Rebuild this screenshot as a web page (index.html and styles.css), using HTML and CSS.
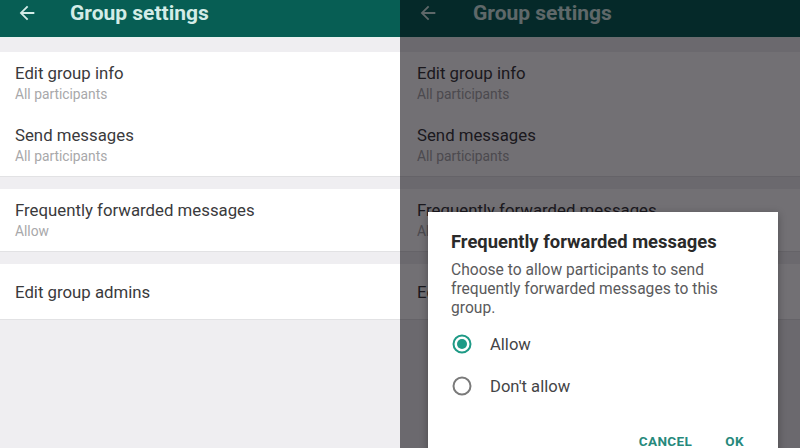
FILE: index.html
```html
<!DOCTYPE html>
<html>
<head>
<meta charset="utf-8">
<link rel="stylesheet" href="styles.css">
</head>
<body>
<div class="stage">
  <div class="phone">
    <div class="header">
      <svg class="back" viewBox="0 0 24 24" width="22" height="22"><path d="M20 11H7.830l5.59-5.59L12 4l-8 8 8 8 1.41-1.41L7.83 13H20v-2z" fill="#d3ece7"/></svg>
      <div class="title">Group settings</div>
    </div>
    <div class="band"></div>
    <div class="section">
      <div class="item"><div class="t">Edit group info</div><div class="s">All participants</div></div>
      <div class="item"><div class="t">Send messages</div><div class="s">All participants</div></div>
    </div>
    <div class="gap"></div>
    <div class="section">
      <div class="item"><div class="t">Frequently forwarded messages</div><div class="s">Allow</div></div>
    </div>
    <div class="gap"></div>
    <div class="section">
      <div class="item single"><div class="t">Edit group admins</div></div>
    </div>
  </div>
  <div class="phone shifted">
    <div class="header">
      <svg class="back" viewBox="0 0 24 24" width="22" height="22"><path d="M20 11H7.83l5.59-5.59L12 4l-8 8 8 8 1.41-1.41L7.83 13H20v-2z" fill="#d3ece7"/></svg>
      <div class="title">Group settings</div>
    </div>
    <div class="band"></div>
    <div class="section">
      <div class="item"><div class="t">Edit group info</div><div class="s">All participants</div></div>
      <div class="item"><div class="t">Send messages</div><div class="s">All participants</div></div>
    </div>
    <div class="gap"></div>
    <div class="section">
      <div class="item"><div class="t">Frequently forwarded messages</div><div class="s">Allow</div></div>
    </div>
    <div class="gap"></div>
    <div class="section">
      <div class="item single"><div class="t">Edit group admins</div></div>
    </div>
    <div class="overlay"></div>
    <div class="dialog">
      <div class="d-title">Frequently forwarded messages</div>
      <div class="d-body">Choose to allow participants to send frequently forwarded messages to this group.</div>
      <div class="options">
        <div class="radio">
          <svg viewBox="0 0 22 22" width="22" height="22"><circle cx="11" cy="11" r="8.5" fill="none" stroke="#1e9a86" stroke-width="2"/><circle cx="11" cy="11" r="5" fill="#1e9a86"/></svg>
          <span>Allow</span>
        </div>
        <div class="radio">
          <svg viewBox="0 0 22 22" width="22" height="22"><circle cx="11" cy="11" r="8.5" fill="none" stroke="#7a7a7a" stroke-width="2"/></svg>
          <span>Don't allow</span>
        </div>
      </div>
      <div class="actions">
        <span class="btn">CANCEL</span>
        <span class="btn">OK</span>
      </div>
    </div>
  </div>
</div>
</body>
</html>
```
FILE: styles.css
```css
* { box-sizing: border-box; }
html, body { margin: 0; padding: 0; }
body {
  width: 800px;
  height: 448px;
  overflow: hidden;
  font-family: Roboto, "Noto Sans", "Liberation Sans", sans-serif;
  background: #efeef1;
}
.stage {
  display: flex;
  width: 800px;
  height: 448px;
}
.phone {
  position: relative;
  width: 400px;
  height: 448px;
  overflow: hidden;
  background: #efeef1;
}
.phone.shifted .header,
.phone.shifted .item { padding-left: 17px; }
.header {
  height: 37px;
  background: #075e54;
  display: flex;
  align-items: flex-start;
  padding: 2px 0 0 16px;
  box-shadow: 0 1px 0 #e9f3f1;
}
.back { display: block; flex: none; }
.title {
  margin-left: 32px;
  font-size: 21px;
  line-height: 22px;
  font-weight: 700;
  color: #d3ece7;
}
.phone.shifted .title { margin-left: 34px; }
.band { height: 15px; }
.gap { height: 12px; }
.section {
  background: #fff;
  border-bottom: 1px solid #e2e2e4;
}
.item {
  height: 62px;
  padding: 11px 0 0 15px;
}
.item.single {
  height: 55px;
  padding-top: 18px;
}
.t {
  font-size: 16.8px;
  line-height: 20px;
  color: #3a3a3c;
}
.s {
  margin-top: 3px;
  font-size: 13.8px;
  line-height: 17px;
  color: #a8a8aa;
}
.overlay {
  position: absolute;
  inset: 0;
  background: rgba(4, 0, 8, 0.56);
}
.dialog {
  position: absolute;
  left: 28px;
  top: 212px;
  width: 350px;
  height: 260px;
  background: #fff;
  padding: 19px 30px 0 23px;
  box-shadow: 0 2px 8px rgba(0,0,0,0.3);
}
.d-title {
  font-size: 18.4px;
  line-height: 22px;
  font-weight: 700;
  color: #2a2a2a;
  white-space: nowrap;
}
.d-body {
  margin-top: 8px;
  font-size: 15.6px;
  line-height: 19px;
  color: #5a5a5c;
  width: 295px;
}
.options { margin-top: 5px; }
.radio {
  display: flex;
  align-items: center;
  height: 42px;
}
.radio svg { display: block; flex: none; }
.radio span {
  margin-left: 17px;
  font-size: 16.6px;
  color: #444446;
}
.actions {
  display: flex;
  justify-content: flex-end;
  gap: 33px;
  margin-top: 26px;
  padding-right: 4px;
}
.btn {
  font-size: 13.5px;
  font-weight: 700;
  line-height: 16px;
  color: #26897c;
  letter-spacing: 0.4px;
}
```
